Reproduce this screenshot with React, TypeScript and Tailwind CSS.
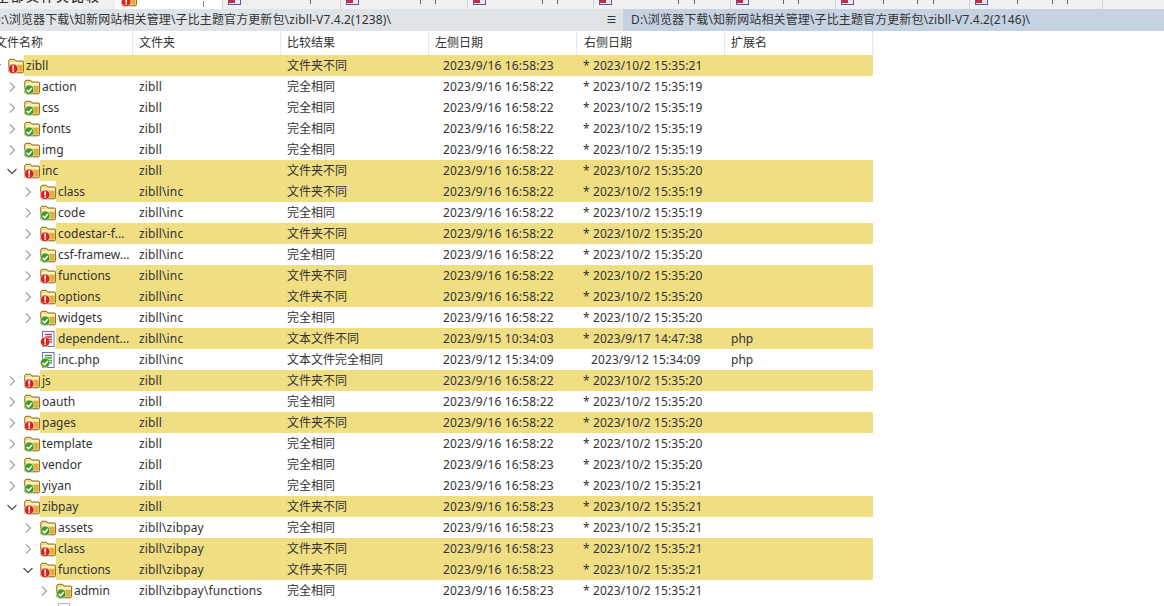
// App.tsx
import React from "react";

type Badge = "same" | "diff";
type Fold = "open" | "closed" | "none";

interface Row {
  name: string;
  depth: number;
  fold: Fold;
  kind: "folder" | "file";
  badge: Badge;
  dir: string;
  result: string;
  left: string;
  right: string;
  ext?: string;
  star?: boolean;
}

const DEPTH_MARGIN = ["-ml-3", "ml-1", "ml-5", "ml-9"];

const L22 = "2023/9/16 16:58:22";
const L23 = "2023/9/16 16:58:23";
const R19 = "2023/10/2 15:35:19";
const R20 = "2023/10/2 15:35:20";
const R21 = "2023/10/2 15:35:21";
const SAME = "完全相同";
const DIFF = "文件夹不同";

function dirRow(
  name: string,
  depth: number,
  badge: Badge,
  dir: string,
  left: string,
  right: string,
  fold: Fold = "closed",
): Row {
  return {
    name,
    depth,
    fold,
    kind: "folder",
    badge,
    dir,
    result: badge === "same" ? SAME : DIFF,
    left,
    right,
    star: true,
  };
}

const rows: Row[] = [
  dirRow("zibll", 0, "diff", "", L23, R21, "open"),
  dirRow("action", 1, "same", "zibll", L22, R19),
  dirRow("css", 1, "same", "zibll", L22, R19),
  dirRow("fonts", 1, "same", "zibll", L22, R19),
  dirRow("img", 1, "same", "zibll", L22, R19),
  dirRow("inc", 1, "diff", "zibll", L22, R20, "open"),
  dirRow("class", 2, "diff", "zibll\\inc", L22, R19),
  dirRow("code", 2, "same", "zibll\\inc", L22, R19),
  dirRow("codestar-f...", 2, "diff", "zibll\\inc", L22, R20),
  dirRow("csf-framew...", 2, "same", "zibll\\inc", L22, R20),
  dirRow("functions", 2, "diff", "zibll\\inc", L22, R20),
  dirRow("options", 2, "diff", "zibll\\inc", L22, R20),
  dirRow("widgets", 2, "same", "zibll\\inc", L22, R20),
  {
    name: "dependent...",
    depth: 2,
    fold: "none",
    kind: "file",
    badge: "diff",
    dir: "zibll\\inc",
    result: "文本文件不同",
    left: "2023/9/15 10:34:03",
    right: "2023/9/17 14:47:38",
    ext: "php",
    star: true,
  },
  {
    name: "inc.php",
    depth: 2,
    fold: "none",
    kind: "file",
    badge: "same",
    dir: "zibll\\inc",
    result: "文本文件完全相同",
    left: "2023/9/12 15:34:09",
    right: "2023/9/12 15:34:09",
    ext: "php",
  },
  dirRow("js", 1, "diff", "zibll", L22, R20),
  dirRow("oauth", 1, "same", "zibll", L22, R20),
  dirRow("pages", 1, "diff", "zibll", L22, R20),
  dirRow("template", 1, "same", "zibll", L22, R20),
  dirRow("vendor", 1, "same", "zibll", L23, R20),
  dirRow("yiyan", 1, "same", "zibll", L23, R21),
  dirRow("zibpay", 1, "diff", "zibll", L23, R21, "open"),
  dirRow("assets", 2, "same", "zibll\\zibpay", L23, R21),
  dirRow("class", 2, "diff", "zibll\\zibpay", L23, R21),
  dirRow("functions", 2, "diff", "zibll\\zibpay", L23, R21, "open"),
  dirRow("admin", 3, "same", "zibll\\zibpay\\functions", L23, R21),
];

const columns = [
  { label: "文件夹", className: "w-[148px] pl-[6px]" },
  { label: "比较结果", className: "w-[148px] pl-[6px]" },
  { label: "左侧日期", className: "w-[148px] pl-[6px]" },
  { label: "右侧日期", className: "w-[148px] pl-[7px]" },
  { label: "扩展名", className: "w-[148px] pl-[6px]" },
];

const tabs = [
  { className: "w-[118px]", ticks: ["ml-[69px]"] },
  { className: "w-[127px]", ticks: ["ml-[61px]", "ml-[14px]"] },
  { className: "w-[126px]", ticks: ["ml-[56px]", "ml-[14px]"] },
  { className: "w-[137px]", ticks: ["ml-[66px]", "ml-[15px]"] },
  { className: "w-[105px]", ticks: ["ml-[34px]", "ml-[14px]"] },
  { className: "w-[134px]", ticks: ["ml-[29px]", "ml-[33px]", "ml-[15px]"] },
  { className: "w-[133px]", ticks: ["ml-[29px]", "ml-[34px]", "ml-[14px]"] },
];

function Badge({ type }: { type: Badge }) {
  if (type === "diff") {
    return (
      <g>
        <circle cx="5.2" cy="10.8" r="4.8" fill="#d9231f" stroke="#fff" strokeWidth="0.6" />
        <rect x="4.4" y="7.4" width="1.6" height="4.2" fill="#fff" />
        <rect x="4.4" y="12.4" width="1.6" height="1.5" fill="#fff" />
      </g>
    );
  }
  return (
    <g>
      <circle cx="5.2" cy="10.8" r="4.8" fill="#3f9c1f" stroke="#fff" strokeWidth="0.6" />
      <path d="M2.6 10.8l2 2 3.3-3.8" fill="none" stroke="#fff" strokeWidth="1.6" />
    </g>
  );
}

function FolderIcon({ badge }: { badge: Badge }) {
  return (
    <svg viewBox="0 0 16 16" className="h-4 w-4 shrink-0">
      <path
        d="M0.8 13.5V2.5L1.8 1.3H6.5L8 3H14.8L15.6 4V13.8L14.8 14.8H2Z"
        fill="#f6dc80"
        stroke="#86671c"
        strokeWidth="1"
      />
      <path d="M1.5 5H15" stroke="#fff6cc" strokeWidth="1.6" />
      <rect x="9" y="7" width="5.5" height="6.5" fill="#dcae3c" />
      <Badge type={badge} />
    </svg>
  );
}

function FileIcon({ badge }: { badge: Badge }) {
  const line = badge === "diff" ? "#c2334d" : "#3c9a3a";
  return (
    <svg viewBox="0 0 16 16" className="h-4 w-4 shrink-0">
      <rect x="2.5" y="0.5" width="11.5" height="15" fill="#fff" stroke="#6c6fb4" strokeWidth="1" />
      <path d="M5 3.5H12M5 6H12M7 8.5H12M9 11H12" stroke={line} strokeWidth="1.3" />
      <Badge type={badge} />
    </svg>
  );
}

function Chevron({ fold }: { fold: Fold }) {
  if (fold === "none") return <span className="h-4 w-4 shrink-0" />;
  return (
    <svg viewBox="0 0 16 16" className="h-4 w-4 shrink-0" fill="none" strokeWidth="1.3">
      {fold === "open" ? (
        <path d="M3.5 6L8 10.5L12.5 6" stroke="#555" />
      ) : (
        <path d="M6 3.5L10.5 8L6 12.5" stroke="#a6a6a6" />
      )}
    </svg>
  );
}

function TabStrip() {
  return (
    <div className="flex h-[9px] overflow-hidden bg-[#f0f0f0]">
      <div className="w-[115px] shrink-0 overflow-hidden">
        <div className="-mt-[13px] -ml-1 text-[13px] leading-[18px] font-medium tracking-[2px] whitespace-nowrap text-[#333]">
          全部文件夹比较
        </div>
      </div>
      <div className="flex w-[107px] shrink-0 items-end overflow-hidden bg-white pl-[6px]">
        <div className="h-[9px] overflow-hidden">
          <div className="-mt-[9px]">
            <FolderIcon badge="diff" />
          </div>
        </div>
        <span className="mb-[2px] ml-[66px] h-[6px] w-px bg-[#888]" />
      </div>
      {tabs.map((tab, i) => (
        <div
          key={i}
          className={`flex shrink-0 items-start overflow-hidden border-l border-[#d4d4d4] pl-[5px] ${tab.className}`}
        >
          <div className="h-[5px] w-[13px] shrink-0 border-x border-b border-[#5a55b0] bg-[#ece8f4]">
            <div className="h-[3px] w-[6px] bg-[#c0303e]" />
          </div>
          {tab.ticks.map((tick, j) => (
            <span key={j} className={`h-[4px] w-px shrink-0 bg-[#666] ${tick}`} />
          ))}
        </div>
      ))}
      <div className="flex-1 border-l border-[#d4d4d4]" />
    </div>
  );
}

function PathBar() {
  return (
    <div className="flex h-[22px] items-center text-[12px] tracking-[0.12px] text-[#333]">
      <div className="flex h-full w-[623px] shrink-0 items-center justify-between bg-[#dfe4e8] pr-[6px]">
        <span className="-ml-[8px] whitespace-nowrap">
          D:\浏览器下载\知新网站相关管理\子比主题官方更新包\zibll-V7.4.2(1238)\
        </span>
        <span className="text-[11px] font-bold text-[#333]">≡</span>
      </div>
      <div className="flex h-full flex-1 items-center bg-[#c6d2e2] pl-2 whitespace-nowrap">
        D:\浏览器下载\知新网站相关管理\子比主题官方更新包\zibll-V7.4.2(2146)\
      </div>
    </div>
  );
}

function HeaderRow() {
  return (
    <div className="flex h-6 w-[873px] items-center bg-white text-[#333]">
      <div className="flex h-full w-[133px] shrink-0 items-center overflow-hidden border-r border-[#e8e8e8]">
        <span className="-ml-[5px] whitespace-nowrap">文件名称</span>
      </div>
      {columns.map((col) => (
        <div
          key={col.label}
          className={`flex h-full shrink-0 items-center border-r border-[#e8e8e8] ${col.className}`}
        >
          {col.label}
        </div>
      ))}
    </div>
  );
}

function TableRow({ row }: { row: Row }) {
  const marked = row.badge === "diff" ? "bg-[#f0de82]" : "";
  return (
    <div className="flex h-[21px] w-[873px] items-center text-[#333]">
      <div className="flex h-full w-[133px] shrink-0 overflow-hidden">
        <div className={`flex h-full flex-1 items-center ${DEPTH_MARGIN[row.depth]}`}>
          <Chevron fold={row.fold} />
          <div className="ml-1">
            {row.kind === "folder" ? <FolderIcon badge={row.badge} /> : <FileIcon badge={row.badge} />}
          </div>
          <div className={`flex h-full flex-1 items-center pl-[2px] whitespace-nowrap ${marked}`}>
            {row.name}
          </div>
        </div>
      </div>
      <div className={`flex h-full flex-1 items-center whitespace-pre ${marked}`}>
        <div className="w-[148px] shrink-0 pl-[6px] tracking-[0.14px]">{row.dir}</div>
        <div className="w-[148px] shrink-0 pl-[6px]">{row.result}</div>
        <div className="w-[148px] shrink-0 pl-[14px] tracking-[0.17px]">{row.left}</div>
        <div className={`w-[148px] shrink-0 tracking-[0.1px] ${row.star ? "pl-[6px]" : "pl-[14px]"}`}>
          {row.star ? "* " : ""}
          {row.right}
        </div>
        <div className="w-[148px] shrink-0 pl-[6px]">{row.ext}</div>
      </div>
    </div>
  );
}

export default function App() {
  return (
    <div
      className="h-[606px] w-[1164px] overflow-hidden bg-white text-[12px]"
      style={{ fontFamily: '"Noto Sans", "Noto Sans CJK SC", sans-serif' }}
    >
      <TabStrip />
      <PathBar />
      <HeaderRow />
      {rows.map((row, i) => (
        <TableRow key={i} row={row} />
      ))}
      <div className="ml-[56px] h-[21px] pt-[2px]">
        <svg viewBox="0 0 16 16" className="h-4 w-4">
          <rect x="2.5" y="0.5" width="11" height="15" fill="#fff" stroke="#a9abd8" strokeWidth="1" />
        </svg>
      </div>
    </div>
  );
}
